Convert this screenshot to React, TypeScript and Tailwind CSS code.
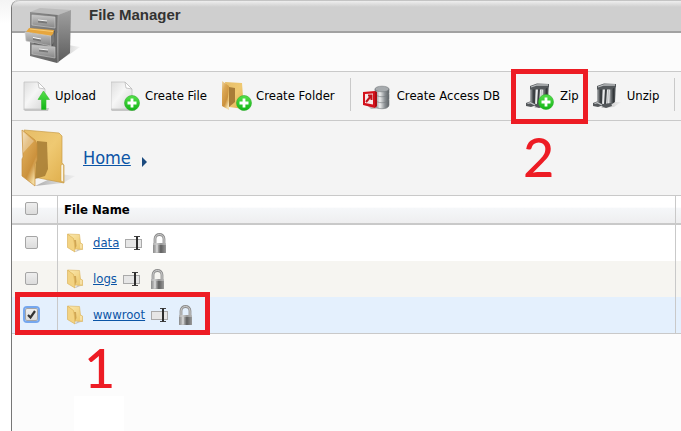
import { useState } from "react";
import type { ReactNode } from "react";

function Gradients() {
  return (
    <svg className="absolute h-0 w-0" aria-hidden="true">
      <defs>
        <linearGradient id="gold" x1="0" y1="0" x2="1" y2="1">
          <stop offset="0" stopColor="#e6bd68" />
          <stop offset="0.5" stopColor="#efc972" />
          <stop offset="1" stopColor="#dfae4c" />
        </linearGradient>
        <linearGradient id="goldFlap" x1="0" y1="0" x2="0.6" y2="1">
          <stop offset="0" stopColor="#f0d9ac" />
          <stop offset="0.35" stopColor="#dba753" />
          <stop offset="0.75" stopColor="#cb913c" />
          <stop offset="1" stopColor="#f3dba0" />
        </linearGradient>
        <linearGradient id="goldLight" x1="0" y1="0" x2="1" y2="1">
          <stop offset="0" stopColor="#fbe9b0" />
          <stop offset="1" stopColor="#ecc566" />
        </linearGradient>
        <linearGradient id="paper" x1="0" y1="0" x2="1" y2="1">
          <stop offset="0" stopColor="#dedede" />
          <stop offset="0.45" stopColor="#f6f6f6" />
          <stop offset="1" stopColor="#d6d6d6" />
        </linearGradient>
        <linearGradient id="steelSide" x1="0" y1="0" x2="0" y2="1">
          <stop offset="0" stopColor="#a0a0a0" />
          <stop offset="1" stopColor="#5c5c5c" />
        </linearGradient>
        <linearGradient id="steelFront" x1="0" y1="0" x2="1" y2="1">
          <stop offset="0" stopColor="#8c8c8c" />
          <stop offset="1" stopColor="#606060" />
        </linearGradient>
        <linearGradient id="drawer" x1="0" y1="0" x2="0" y2="1">
          <stop offset="0" stopColor="#c6c6c6" />
          <stop offset="1" stopColor="#858585" />
        </linearGradient>
        <linearGradient id="metal" x1="0" y1="0" x2="1" y2="0">
          <stop offset="0" stopColor="#7d8286" />
          <stop offset="0.35" stopColor="#eceded" />
          <stop offset="0.7" stopColor="#8b9094" />
          <stop offset="1" stopColor="#5c6165" />
        </linearGradient>
        <linearGradient id="iron" x1="0" y1="0" x2="1" y2="0">
          <stop offset="0" stopColor="#b3b6b8" />
          <stop offset="0.4" stopColor="#5a5e61" />
          <stop offset="0.7" stopColor="#2a2e31" />
          <stop offset="1" stopColor="#8c9093" />
        </linearGradient>
        <linearGradient id="lockBody" x1="0" y1="0" x2="1" y2="0">
          <stop offset="0" stopColor="#8a8a8a" />
          <stop offset="0.3" stopColor="#c9c9c9" />
          <stop offset="0.6" stopColor="#5f5f5f" />
          <stop offset="1" stopColor="#9a9a9a" />
        </linearGradient>
        <linearGradient id="green" x1="0" y1="0" x2="0" y2="1">
          <stop offset="0" stopColor="#55e04a" />
          <stop offset="1" stopColor="#12b516" />
        </linearGradient>
        <linearGradient id="shade" x1="0" y1="0" x2="1" y2="0">
          <stop offset="0" stopColor="#8a8a8a" stopOpacity="0.7" />
          <stop offset="1" stopColor="#bdbdbd" stopOpacity="0.15" />
        </linearGradient>
      </defs>
    </svg>
  );
}

function CabinetIcon() {
  return (
    <svg width="56" height="56" viewBox="0 0 56 56" aria-hidden="true">
      <path d="M44 37 L56 39 L46 46 L33 54 Z" fill="url(#shade)" />
      <path d="M6 4 L16 0 L47 2 L34 7 Z" fill="#bcbcbc" />
      <path d="M34 7 L47 2 L46 45 L33 55 Z" fill="url(#steelSide)" />
      <path d="M6 4 L34 7 L33 55 L6 48 Z" fill="url(#steelFront)" />
      <path d="M34 7 V55" stroke="#a4a4a4" strokeWidth="0.7" />
      <path d="M8 7 L31 9 L31 20 L8 17 Z" fill="url(#drawer)" stroke="#cfcfcf" strokeWidth="0.6" />
      <path d="M14 12 L23 13 V15.500 L14 14.500 Z" fill="#777" />
      <path d="M14 12 L23 13" stroke="#f2f2f2" />
      <path d="M8 37 L31 39 L31 50 L8 46 Z" fill="url(#drawer)" stroke="#c8c8c8" strokeWidth="0.6" />
      <path d="M15 41 L24 42 V44.500 L15 43.500 Z" fill="#777" />
      <path d="M15 41 L24 42" stroke="#f2f2f2" />
      <path d="M5 21 L31 23 L29 38 L10 36 Z" fill="#555" />
      <path d="M5 20 L30 22 L29 29 L2 24 Z" fill="#e6a63d" />
      <path d="M6 21 L29 23.500" stroke="#f6cc78" />
      <path d="M1 24 L27 28 L27 38 L2 33 Z" fill="url(#drawer)" stroke="#cfcfcf" strokeWidth="0.6" />
      <path d="M27 28 L30 25 V34 L27 38 Z" fill="#777" />
      <path d="M9 29.500 L17 31 V33.500 L9 32 Z" fill="#777" />
      <path d="M9 29.500 L17 31" stroke="#fff" />
    </svg>
  );
}

function PlusBadge({ x, y }: { x: number; y: number }) {
  return (
    <g transform={`translate(${x} ${y})`}>
      <circle r="7.500" fill="url(#green)" stroke="#2fae2d" strokeWidth="0.6" />
      <path d="M0 -4.500 V4.500 M-4.500 0 H4.500" stroke="#fff" strokeWidth="2.800" />
    </g>
  );
}

function ToolIcon({ children }: { children: ReactNode }) {
  return (
    <svg width="32" height="32" viewBox="0 0 32 32" className="shrink-0" aria-hidden="true">
      {children}
    </svg>
  );
}

function Sheet() {
  return (
    <>
      <path d="M2 29 L4 31 H27 L28 28 Z" fill="#c6c6c6" />
      <path d="M3 2 H17 L24 9 V29 H3 Z" fill="url(#paper)" stroke="#c4c4c4" strokeWidth="0.8" />
      <path d="M17 2 L18 8 L24 9 Z" fill="#fff" stroke="#bbb" strokeWidth="0.8" />
    </>
  );
}

function UploadIcon() {
  return (
    <ToolIcon>
      <Sheet />
      <path d="M22.500 11 L28.500 19.500 H25 V29.500 H20.500 V19.500 H17 Z" fill="url(#green)" stroke="#35bb2e" strokeWidth="0.6" />
    </ToolIcon>
  );
}

function CreateFileIcon() {
  return (
    <ToolIcon>
      <g transform="translate(-3 0)">
        <Sheet />
      </g>
      <PlusBadge x={21} y={23} />
    </ToolIcon>
  );
}

function CreateFolderIcon() {
  return (
    <ToolIcon>
      <path d="M18 26 L28 26 L20 31 Z" fill="url(#shade)" />
      <path d="M3 2 L20 3 L21 17 L22 29 L7 27 Z" fill="url(#gold)" />
      <path d="M7 7 L13 8 L13 22 L7 27 Z" fill="#a87c38" />
      <path d="M0 1 L7 6 L6 18 L7 30 L0 26 Z" fill="url(#goldFlap)" />
      <PlusBadge x={22} y={23} />
    </ToolIcon>
  );
}

function DatabaseIcon() {
  return (
    <ToolIcon>
      <path d="M4 25 H26 L24 29 H8 Z" fill="url(#shade)" />
      <g stroke="#73787c" strokeWidth="0.6">
        <path d="M12 20 V25 C12 30 26 30 26 25 V20 Z" fill="url(#metal)" />
        <path d="M12 14 V19 C12 24 26 24 26 19 V14 Z" fill="url(#metal)" />
        <path d="M12 9 V13 C12 18 26 18 26 13 V9 Z" fill="url(#metal)" />
        <ellipse cx="19" cy="9" rx="7" ry="2.800" fill="#a7abae" />
      </g>
      <path d="M0 12 L12 11 V28 L0 25 Z" fill="#d4111b" />
      <path d="M12 11 L14 12 V26 L12 28 Z" fill="#a90d14" />
      <path d="M2 14 L10 13.500 V24.500 L2 23 Z" fill="#f6e9e9" />
      <path d="M3 22 L8.500 15.500 M5 15.500 H8.500 V20" fill="none" stroke="#c2141c" strokeWidth="2" />
    </ToolIcon>
  );
}

function Clamp() {
  return (
    <>
      <path d="M18 22 L28 22 L21 27 L8 28 Z" fill="url(#shade)" />
      <path d="M8 9 H19 L18 25 H7 Z" fill="#e9eaeb" />
      <path d="M4 7 L10 8 L9 25 L4 25 Z" fill="url(#iron)" />
      <path d="M13 9 L12 25" stroke="#3c4043" strokeWidth="2" />
      <path d="M15.500 10 L14.500 24" stroke="#b9bcbe" />
      <path d="M17 7 L23 5 L22 22 L16 26 Z" fill="url(#iron)" />
      <path d="M4 6 L11 3.500 L23 4 L23 7 L18 9.500 L4 9.500 Z" fill="#54585b" />
      <path d="M5 7 L11 5 L22 5" fill="none" stroke="#b9bcbe" strokeWidth="1.300" />
      <path d="M0 23 L4 21.500 L10 24 L18 23 L19 26 L13 28 L8 26 L5 27 L0 26 Z" fill="#54585b" />
      <path d="M1.500 23.500 L4.500 22.700 L9 25" fill="none" stroke="#c4c7c9" strokeWidth="1.200" />
    </>
  );
}

function ZipIcon() {
  return (
    <ToolIcon>
      <Clamp />
      <PlusBadge x={20} y={22} />
    </ToolIcon>
  );
}

function UnzipIcon() {
  return (
    <ToolIcon>
      <Clamp />
    </ToolIcon>
  );
}

function LargeFolderIcon() {
  return (
    <svg width="56" height="60" viewBox="0 0 56 60" aria-hidden="true">
      <path d="M39 46 L54 48 L42 55 L14 58 Z" fill="url(#shade)" />
      <path d="M3 2 L38 5 L41 8 L41 35 L43 37 L43 55 L13 49 Z" fill="url(#gold)" stroke="#c99c48" strokeWidth="0.700" />
      <path d="M16 13 L26 14 L27 41 L24 48 L14 51 Z" fill="#a1772f" opacity="0.8" />
      <path d="M40 37 L42.500 36 V54 L40 53 Z" fill="#fbf5e4" stroke="#c99c48" strokeWidth="0.500" />
      <path d="M1 2 L14 12 L16 16 V32 L14 36 V58 L1 48 V31 L2 29 Z" fill="url(#goldFlap)" stroke="#c58e3b" strokeWidth="0.700" />
      <path d="M2 4 L13 13 L2 25 Z" fill="#fff" opacity="0.3" />
    </svg>
  );
}

function SmallFolderIcon() {
  return (
    <svg width="17" height="20" viewBox="0 0 17 20" aria-hidden="true">
      <path d="M12 15 L17 16 L8 19 Z" fill="url(#shade)" />
      <path d="M1 1 L12.500 1.500 L13.500 10 L15.500 11 V16.500 L7 16 Z" fill="url(#goldLight)" stroke="#dcb45c" strokeWidth="0.600" />
      <path d="M7 7 L9 7 L9.500 13 L8 16 Z" fill="#c0923e" opacity="0.7" />
      <path d="M0.500 1 L6.500 5.500 L7.500 11 L8 19 L0.500 14.500 Z" fill="#f3d382" stroke="#d9ac50" strokeWidth="0.600" />
      <path d="M14 11 V15.500" stroke="#fff6db" />
    </svg>
  );
}

function RenameIcon() {
  return (
    <svg width="18" height="16" viewBox="0 0 18 16" aria-hidden="true">
      <rect x="0.500" y="4.500" width="16" height="8" fill="#e6e6e6" stroke="#aaa" />
      <path d="M9 1.500 H15 M9 14.500 H15" stroke="#444" />
      <path d="M12 1.500 V14.500" stroke="#2c2c2c" strokeWidth="2" />
    </svg>
  );
}

function LockIcon() {
  return (
    <svg width="15" height="20" viewBox="0 0 15 20" aria-hidden="true">
      <path d="M3 11 V6 C3 0 12 0 12 6 V11" fill="none" stroke="#8e8e8e" strokeWidth="2.800" />
      <path d="M3 11 V6 C3 0 12 0 12 6 V11" fill="none" stroke="#cfcfcf" />
      <rect x="1" y="10" width="13" height="10" rx="0.500" fill="url(#lockBody)" />
      <path d="M1 11 H14" stroke="#d2d2d2" />
      <path d="M5 12 V19" stroke="#ddd" />
    </svg>
  );
}

function Tick({ label, checked, onChange }: { label: string; checked: boolean; onChange: () => void }) {
  return (
    <span className="relative mx-auto block h-[13px] w-[13px]">
      <input
        type="checkbox"
        aria-label={label}
        checked={checked}
        onChange={onChange}
        className="block h-[13px] w-[13px] appearance-none rounded-xs border border-[#a5a5a5] bg-linear-to-b from-[#eeeeee] to-[#dcdcdc] checked:outline-2 checked:outline-[#75a7ee]"
      />
      {checked && (
        <svg viewBox="0 0 13 13" className="pointer-events-none absolute inset-0 h-[13px] w-[13px]" aria-hidden="true">
          <path d="M3 7 L5.500 9.500 L10 3" fill="none" stroke="#333" strokeWidth="2.200" />
        </svg>
      )}
    </span>
  );
}

function ToolButton({ icon, label, marker }: { icon: ReactNode; label: string; marker?: ReactNode }) {
  return (
    <button type="button" className="relative flex shrink-0 items-center gap-0.5 whitespace-nowrap">
      {icon}
      {label}
      {marker}
    </button>
  );
}

const folders = [
  { name: "data", row: "bg-white" },
  { name: "logs", row: "bg-[#f6f5f1]" },
  { name: "wwwroot", row: "bg-[#e4f0fd]" },
];

export default function App() {
  const [selected, setSelected] = useState<string[]>(["wwwroot"]);
  const toggle = (name: string) =>
    setSelected((s) => (s.includes(name) ? s.filter((n) => n !== name) : [...s, name]));
  const allSelected = selected.length === folders.length;

  return (
    <div className="min-h-screen overflow-hidden bg-linear-to-b from-[#f4f4f4] to-white to-[24px] pl-[11px] font-['DejaVu_Sans_Condensed','DejaVu_Sans',sans-serif] text-[13px] leading-4 text-black">
      <Gradients />
      <main className="relative min-h-screen rounded-tl-lg border-l border-[#777777] bg-[#fcfcfc]">
        <header className="relative h-[33px] rounded-tl-lg border-t border-b-2 border-t-[#c4c4c4] border-b-[#a2a2a2] bg-linear-to-b from-[#eeeeee] to-[#cfcfcf] to-[6px]">
          <h1 className="pt-1 pl-[77px] font-['Liberation_Sans',sans-serif] text-[15px] leading-5 font-bold text-[#333333]">
            File Manager
          </h1>
          <div className="absolute top-[7px] left-3">
            <CabinetIcon />
          </div>
        </header>

        <div className="mt-[38px] flex h-[50px] items-start gap-[15px] border-y border-[#c9c9c9] bg-[#f4f4f4] pt-2 pl-[9px]">
          <ToolButton icon={<UploadIcon />} label="Upload" />
          <ToolButton icon={<CreateFileIcon />} label="Create File" />
          <ToolButton icon={<CreateFolderIcon />} label="Create Folder" />
          <div className="flex gap-3">
            <span className="-mt-0.5 h-[33px] w-px shrink-0 bg-[#c9c9c9]" />
            <ToolButton icon={<DatabaseIcon />} label="Create Access DB" />
          </div>
          <div className="flex gap-3.5 pl-[11px]">
            <ToolButton
              icon={<ZipIcon />}
              label="Zip"
              marker={
                <span className="pointer-events-none absolute -top-[11px] -right-[9px] -bottom-3 -left-[15px] border-[5px] border-[#ed1c24]">
                  <span className="absolute top-[50px] left-[7px] font-['Lato',sans-serif] text-[54px] leading-[66px] font-medium text-[#ed1c24]">
                    2
                  </span>
                </span>
              }
            />
            <ToolButton icon={<UnzipIcon />} label="Unzip" />
          </div>
          <span className="-mt-0.5 h-[33px] w-px shrink-0 bg-[#c9c9c9]" />
        </div>

        <nav className="flex h-[74px] items-center bg-[#f4f4f4] pl-[9px]" aria-label="Path">
          <LargeFolderIcon />
          <a href="#home" className="ml-1.5 text-lg leading-6 text-[#0c55a6] underline">
            Home
          </a>
          <svg width="6" height="10" viewBox="0 0 6 10" className="mt-2 ml-[11px]" aria-hidden="true">
            <path d="M0 0 L5 5 L0 10 Z" fill="#1b4a7e" />
          </svg>
        </nav>

        <div className="relative">
          <table className="w-full table-fixed border-separate border-spacing-0 border-b border-[#c9c9c9]">
            <colgroup>
              <col className="w-[46px]" />
              <col />
              <col className="w-[5px]" />
            </colgroup>
            <thead className="bg-linear-to-b from-white from-40% via-[#f5f7f9] via-45% to-[#ededee]">
              <tr className="h-[30px]">
                <th className="border-t border-r border-b-2 border-[#c9c9c9] p-0 pr-[7px] pb-0.5">
                  <Tick
                    label="Select all"
                    checked={allSelected}
                    onChange={() => setSelected(allSelected ? [] : folders.map((f) => f.name))}
                  />
                </th>
                <th className="border-t border-r border-b-2 border-[#c9c9c9] p-0 pl-1.5 text-left font-bold">
                  File Name
                </th>
                <td className="border-t border-b-2 border-[#c9c9c9] p-0" />
              </tr>
            </thead>
            <tbody>
              {folders.map(({ name, row }) => (
                <tr key={name} className={`h-9 ${row}`}>
                  <td className="border-r border-[#c9c9c9] p-0 pr-[7px] pb-0.5">
                    <Tick label={`Select ${name}`} checked={selected.includes(name)} onChange={() => toggle(name)} />
                  </td>
                  <td className="border-r border-[#c9c9c9] p-0 pl-[9px]">
                    <div className="flex items-center">
                      <SmallFolderIcon />
                      <a href={`#${name}`} className="mr-1.5 ml-[9px] text-[#0c55a6] underline">
                        {name}
                      </a>
                      <button type="button" aria-label={`Rename ${name}`}>
                        <RenameIcon />
                      </button>
                      <button type="button" aria-label={`Permissions of ${name}`} className="ml-[9px]">
                        <LockIcon />
                      </button>
                    </div>
                  </td>
                  <td className="p-0" />
                </tr>
              ))}
            </tbody>
          </table>
          <div className="pointer-events-none absolute -bottom-px left-[3px] h-[43px] w-[195px] border-[5px] border-[#ed1c24]">
            <span className="absolute top-[38px] left-[64px] font-['Lato',sans-serif] text-[54px] leading-[66px] font-medium text-[#ed1c24]">
              1
            </span>
          </div>
        </div>

        <div className="absolute bottom-0 left-[62px] h-[35px] w-[50px] bg-white" />
      </main>
    </div>
  );
}
